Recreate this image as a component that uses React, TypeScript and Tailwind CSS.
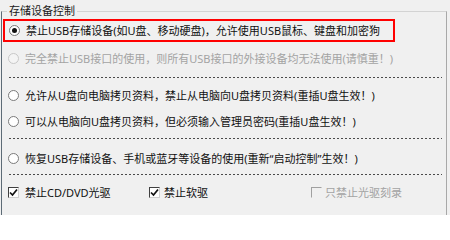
import React from "react";

const font = { fontFamily: '"Noto Sans", "Noto Sans CJK SC", sans-serif' };

function Radio({ checked = false, disabled = false }: { checked?: boolean; disabled?: boolean }) {
  return (
    <span
      className={
        "relative w-[11px] h-[11px] rounded-full border flex items-center justify-center shrink-0 " +
        (disabled ? "border-[#c8c8c8] bg-[#f4f4f4]" : "border-[#7a7a7a] bg-white")
      }
    >
      {checked && <span className="w-[5px] h-[5px] rounded-full bg-[#111]" />}
    </span>
  );
}

function Check({ checked = false, disabled = false }: { checked?: boolean; disabled?: boolean }) {
  return (
    <span
      className={
        "w-[11px] h-[11px] shrink-0 flex items-center justify-center border " +
        (disabled
          ? "border-t-[#a0a0a0] border-l-[#a0a0a0] border-r-[#f0f0f0] border-b-[#f0f0f0] bg-[#f0f0f0]"
          : "border-t-[#404040] border-l-[#404040] border-r-[#d0d0d0] border-b-[#d0d0d0] bg-white")
      }
    >
      {checked && (
        <svg width="9" height="9" viewBox="0 0 9 9">
          <path d="M1 4.5 L3.5 7 L8 1.5" stroke="#111" strokeWidth="1.7" fill="none" />
        </svg>
      )}
    </span>
  );
}

function Dashed() {
  return (
    <div className="ml-[7px] mr-[4px] h-[1px] bg-[repeating-linear-gradient(90deg,#4a4a4a_0_2px,transparent_2px_4px)]" />
  );
}

export default function App() {
  return (
    <div className="w-[450px] h-[215px] overflow-hidden bg-[#f0f0f0] text-[11px] leading-none text-[#111]" style={font}>
      <fieldset className="ml-[1px] mt-[4px] w-[446px] h-[240px] border border-t-[#d3d3d3] border-r-[#a8a8a8] border-l-[#5d6b76] border-b-[#a8a8a8] px-0 pb-0">
        <legend className="ml-[5px] px-[2px] h-[14px] leading-[14px] text-[11px] text-[#1a1a1a]">存储设备控制</legend>
        <div className="flex flex-col">
          <div className="mt-[1px] ml-[1px] w-[392px] h-[23px] border-2 border-[#ff0000] flex items-center pl-[4px] gap-[6px]">
            <Radio checked />
            <span>禁止USB存储设备(如U盘、移动硬盘)，允许使用USB鼠标、键盘和加密狗</span>
          </div>
          <div className="mt-[6px] h-[20px] flex items-center pl-[6px] gap-[6px] text-[#a3a3a3]">
            <Radio disabled />
            <span>完全禁止USB接口的使用，则所有USB接口的外接设备均无法使用(请慎重！)</span>
          </div>
          <div className="mt-[9px]">
            <Dashed />
          </div>
          <div className="mt-[7px] h-[20px] flex items-center pl-[6px] gap-[6px]">
            <Radio />
            <span>允许从U盘向电脑拷贝资料，禁止从电脑向U盘拷贝资料(重插U盘生效！)</span>
          </div>
          <div className="mt-[6px] h-[20px] flex items-center pl-[6px] gap-[6px]">
            <Radio />
            <span>可以从电脑向U盘拷贝资料，但必须输入管理员密码(重插U盘生效！)</span>
          </div>
          <div className="mt-[7px]">
            <Dashed />
          </div>
          <div className="mt-[9px] h-[20px] flex items-center pl-[6px] gap-[6px]">
            <Radio />
            <span>恢复USB存储设备、手机或蓝牙等设备的使用(重新“启动控制”生效！)</span>
          </div>
          <div className="mt-[6px]">
            <Dashed />
          </div>
          <div className="mt-[7px] h-[20px] flex items-center pl-[6px]">
            <div className="w-[141px] flex items-center gap-[6px]">
              <Check checked />
              <span>禁止CD/DVD光驱</span>
            </div>
            <div className="w-[162px] flex items-center gap-[4px]">
              <Check checked />
              <span>禁止软驱</span>
            </div>
            <div className="flex items-center gap-[3px] text-[#a3a3a3]">
              <Check disabled />
              <span>只禁止光驱刻录</span>
            </div>
          </div>
        </div>
      </fieldset>
    </div>
  );
}
